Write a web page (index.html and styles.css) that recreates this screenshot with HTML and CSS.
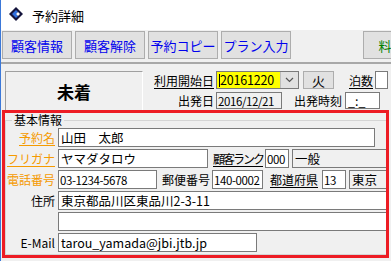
FILE: index.html
```html
<!DOCTYPE html>
<html lang="ja">
<head>
  <meta charset="UTF-8" />
  <title>予約詳細</title>
  <link rel="stylesheet" href="styles.css">
</head>
<body>
  <div class="titlebar">
    <svg class="app-icon" width="14" height="14" viewBox="0 0 14 14">
      <polygon points="7,0 14,7 7,14 0,7" fill="#14143c" />
      <polygon points="3,7 7,3 9,5 7,7 9,9 7,11" fill="#2f6fe0" />
      <polygon points="7,7 9,5 11,7 9,9" fill="#fff" />
    </svg>
    <span class="title">予約詳細</span>
  </div>

  <div class="toolbar">
    <button class="tool">顧客情報</button>
    <button class="tool">顧客解除</button>
    <button class="tool">予約コピー</button>
    <button class="tool">プラン入力</button>
    <button class="tool tool-green">料金表</button>
  </div>

  <div class="header">
    <div class="status">未着</div>
    <div class="header-form">
      <div class="hrow">
        <span class="hlabel ul">利用開始日</span>
        <div class="datebox">
          <span class="date-input"><span class="caret"></span>20161220</span>
          <span class="drop">
            <svg width="9" height="6" viewBox="0 0 9 6"><polyline points="1,1 4.5,4.5 8,1" fill="none" stroke="#555" stroke-width="1.2" /></svg>
          </span>
        </div>
        <button class="day">火</button>
        <span class="hlabel2 ul">泊数</span>
        <span class="field nights"></span>
      </div>
      <div class="hrow hrow2">
        <span class="hlabel">出発日</span>
        <span class="field ro num depart">2016/12/21</span>
        <span class="hlabel3">出発時刻</span>
        <span class="field time">_:_</span>
      </div>
    </div>
  </div>

  <div class="highlight">
    <fieldset class="group">
      <legend>基本情報</legend>
      <div class="row">
        <span class="label orange ul">予約名</span>
        <span class="field w-name">山田　太郎</span>
      </div>
      <div class="row">
        <span class="label orange ul">フリガナ</span>
        <span class="field w-kana">ヤマダタロウ</span>
        <span class="ilabel rank ul">顧客ランク</span>
        <span class="field num w-code">000</span>
        <span class="field ro w-rank">一般</span>
      </div>
      <div class="row">
        <span class="label orange">電話番号</span>
        <span class="field num w-tel">03-1234-5678</span>
        <span class="ilabel zip">郵便番号</span>
        <span class="field num w-zip">140-0002</span>
        <span class="ilabel pref ul">都道府県</span>
        <span class="field num w-code">13</span>
        <span class="field ro w-pref">東京</span>
      </div>
      <div class="row">
        <span class="label">住所</span>
        <span class="field w-addr">東京都品川区東品川2-3-11</span>
      </div>
      <div class="row">
        <span class="label"></span>
        <span class="field w-addr"></span>
      </div>
      <div class="row">
        <span class="label">E-Mail</span>
        <span class="field w-mail">tarou_yamada@jbi.jtb.jp</span>
      </div>
    </fieldset>
  </div>
</body>
</html>
```

FILE: styles.css
```css
* {
  box-sizing: border-box;
}
html, body {
  margin: 0;
  overflow: hidden;
}
body {
  width: 391px;
  height: 261px;
  background: #f0f0f0;
  border-left: 1px solid #3b78d8;
  font-family: "Noto Sans CJK JP", "Liberation Sans", sans-serif;
  font-size: 12px;
  color: #000;
}

/* window title */
.titlebar {
  height: 30px;
  background: #fff;
  display: flex;
  align-items: center;
  padding-left: 8px;
}
.app-icon {
  margin-top: -2px;
}
.title {
  margin-left: 9px;
  font-size: 13px;
  line-height: 1;
}

/* buttons */
.toolbar {
  height: 34px;
  display: flex;
  gap: 3px;
  padding: 1px 0 0 1px;
  border-bottom: 2px solid #a8a8a8;
  white-space: nowrap;
  overflow: hidden;
}
.tool {
  flex: none;
  width: 70px;
  height: 28px;
  padding: 0;
  margin: 0;
  border: 1px solid #adadad;
  background: #e1e1e1;
  color: #0000ee;
  font-family: inherit;
  font-size: 13px;
}
.tool-green {
  margin-left: 69px;
  color: #008000;
}

/* status + dates */
.header {
  height: 46px;
  display: flex;
  padding-top: 7px;
  overflow: hidden;
}
.status {
  flex: none;
  margin-left: 4px;
  width: 138px;
  height: 39px;
  border-top: 1px solid #a0a0a0;
  border-left: 1px solid #a0a0a0;
  border-right: 1px solid #fff;
  display: flex;
  align-items: center;
  justify-content: center;
  font-size: 17px;
  font-weight: bold;
}
.header-form {
  flex: none;
  width: 248px;
  overflow: hidden;
}
.hrow {
  display: flex;
  height: 18px;
  align-items: center;
  white-space: nowrap;
}
.hrow2 {
  margin-top: 3px;
  height: 17px;
}
.hlabel {
  width: 73px;
  padding-right: 2px;
  text-align: right;
}
.hlabel2 {
  margin-left: 15px;
  width: 24px;
}
.hlabel3 {
  margin-left: 12px;
  width: 48px;
}
.ul {
  text-decoration: underline;
  text-underline-offset: 2px;
}
.datebox {
  display: flex;
  height: 18px;
  border: 1px solid #7a7a7a;
}
.date-input {
  width: 63px;
  background: #ffff00;
  padding-left: 2px;
  font-size: 12.5px;
  letter-spacing: -0.2px;
  line-height: 16px;
  display: flex;
  align-items: center;
}
.caret {
  width: 1px;
  height: 13px;
  background: #000;
}
.drop {
  width: 18px;
  background: #e1e1e1;
  border-left: 1px solid #bdbdbd;
  display: flex;
  align-items: center;
  justify-content: center;
}
.day {
  margin: 0 0 0 4px;
  padding: 0;
  width: 31px;
  height: 18px;
  border: 1px solid #adadad;
  background: #e1e1e1;
  font-family: inherit;
  font-size: 13px;
  line-height: 1;
}

/* text boxes */
.field {
  flex: none;
  height: 100%;
  border: 1px solid #7a7a7a;
  background: #fff;
  padding-left: 2px;
  white-space: nowrap;
  overflow: hidden;
  display: flex;
  align-items: center;
  font-size: 12.5px;
}
.ro {
  background: #f0f0f0;
}
.num {
  font-size: 11.5px;
  letter-spacing: -0.4px;
  padding-left: 1px;
}
.nights {
  margin-left: 2px;
  width: 13px;
}
.depart {
  width: 66px;
}
.time {
  margin-left: 3px;
  width: 35px;
}

/* red highlighted group */
.highlight {
  margin-left: 1px;
  width: 387px;
  height: 148px;
  border: 3px solid #ed1c24;
  overflow: hidden;
}
.group {
  margin: 0;
  padding: 1px 0 0 0;
  width: 392px;
  border: 1px solid #d5d5d5;
  min-inline-size: 0;
}
.group legend {
  margin-left: 6px;
  padding: 0 2px;
  font-size: 12px;
  line-height: 14px;
}
.row {
  display: flex;
  align-items: center;
  height: 19px;
  margin-bottom: 2px;
  white-space: nowrap;
}
.label {
  flex: none;
  width: 52px;
  padding-right: 3px;
  text-align: right;
}
.orange {
  color: #f59a00;
}
.ilabel {
  flex: none;
  width: 48px;
}
.rank {
  margin-left: 5px;
  width: 50px;
  letter-spacing: -2px;
}
.zip {
  margin-left: 5px;
  margin-right: 2px;
}
.pref {
  margin-left: 7px;
  margin-right: 2px;
}
.w-name { width: 317px; }
.w-kana { width: 150px; }
.w-code { width: 24px; margin-left: 2px; }
.w-rank { width: 95px; margin-left: 3px; }
.w-tel { width: 99px; }
.w-zip { width: 51px; }
.w-pref { width: 40px; margin-left: 3px; }
.w-addr { width: 329px; }
.w-mail { width: 199px; }
```
